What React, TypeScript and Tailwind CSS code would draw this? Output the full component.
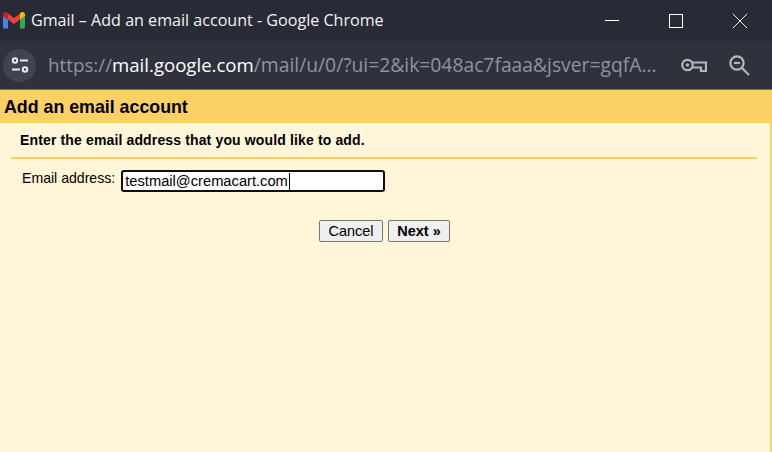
const GmailLogo = () => (
  <svg width="22" height="17" viewBox="0 0 22 17" className="shrink-0">
    <path d="M1.5 16.5C.7 16.5 0 15.8 0 15V4l5 3.5v9z" fill="#4285f4" />
    <path d="M22 4v11c0 .8-.7 1.5-1.5 1.5H17v-9z" fill="#34a853" />
    <path d="M0 4V2.6C0 .6 2.3-.6 3.9.6L5 1.5v6z" fill="#c5221f" />
    <path d="M5 7.5v-6l6 4.4 6-4.4v6l-6 4.4z" fill="#ea4335" />
    <path d="M17 1.5 18.1.6C19.7-.6 22 .6 22 2.6V4l-5 3.5z" fill="#fbbc04" />
  </svg>
)

const TuneIcon = () => (
  <svg width="18" height="18" viewBox="0 0 18 18" fill="none" stroke="#e8eaed" strokeWidth="2">
    <circle cx="4" cy="4.5" r="2.2" />
    <path d="M9 4.5h8" />
    <path d="M1 13.5h8" />
    <circle cx="14" cy="13.5" r="2.2" />
  </svg>
)

const KeyIcon = () => (
  <svg width="26" height="14" viewBox="0 0 26 14" fill="none" stroke="#b4b6ba" strokeWidth="2.2">
    <circle cx="6.5" cy="7" r="5.2" />
    <circle cx="6.5" cy="7" r="1.3" fill="#b4b6ba" strokeWidth="1" />
    <path d="M11.5 4.5H25v8.5h-5V9.5h-8.5" />
  </svg>
)

const ZoomOutIcon = () => (
  <svg width="21" height="21" viewBox="0 0 21 21" fill="none" stroke="#b4b6ba" strokeWidth="2.2">
    <circle cx="8" cy="8" r="6.6" />
    <path d="M5 8h6" />
    <path d="M13 13l7 7" />
  </svg>
)

const App = () => {
  return (
    <div className="flex h-[452px] w-[772px] flex-col overflow-hidden bg-[#fff6d9] font-['Liberation_Sans',Arial,sans-serif]">
      {/* Window title bar */}
      <div className="flex h-[41px] shrink-0 items-center bg-[#282b36] pl-[3px]">
        <GmailLogo />
        <span className="ml-[6px] font-['Open_Sans','Noto_Sans',sans-serif] text-[16.1px] whitespace-nowrap text-[#f1f1f3]">
          Gmail – Add an email account - Google Chrome
        </span>
        <div className="ml-auto flex items-center">
          <div className="h-px w-[14px] bg-white" />
          <div className="ml-[50px] h-[14px] w-[14px] border border-white" />
          <svg width="16" height="16" viewBox="0 0 16 16" className="mr-[24px] ml-[49px]" stroke="#f1f1f3" strokeWidth="1">
            <path d="M.8.8l14.4 14.4M15.2.8.8 15.2" />
          </svg>
        </div>
      </div>

      {/* Address bar */}
      <div className="flex h-[49px] shrink-0 items-center border-b border-b-[#6b6c70] bg-[#2f323c] pl-[3px]">
        <div className="flex h-[33px] w-[33px] items-center justify-center rounded-full bg-[#3f4453]">
          <TuneIcon />
        </div>
        <div className="ml-[12px] font-['Open_Sans','Noto_Sans',sans-serif] text-[19.3px] whitespace-nowrap text-[#8f949c]">
          <span className="text-[18.8px]">https://</span>
          <span className="text-[18.6px] text-white">mail.google.com</span>/mail/u/0/?ui=2&amp;ik=048ac7faaa&amp;jsver=gqfA...
        </div>
        <div className="ml-auto flex items-center">
          <KeyIcon />
          <div className="mr-[22px] ml-[22px]">
            <ZoomOutIcon />
          </div>
        </div>
      </div>

      {/* Dialog */}
      <div className="flex min-h-0 flex-1 flex-col border-r-2 border-r-[#fbd165]">
        <div className="-mr-[2px] flex h-[33px] shrink-0 items-center bg-[#fbd165] pt-[2px] pl-[4px]">
          <h1 className="text-[17.8px] font-bold text-black">Add an email account</h1>
        </div>
        <p className="mt-[8px] ml-[20px] text-[14px] leading-[18px] font-bold tracking-[0.14px] text-black">
          Enter the email address that you would like to add.
        </p>
        <div className="mt-[8px] mr-[13px] ml-[11px] h-[2px] shrink-0 bg-[#fbd165]" />
        <div className="mt-[11px] ml-[22px] flex items-start">
          <label className="text-[14.1px] leading-[16px] whitespace-nowrap text-black">Email address:</label>
          <div className="relative ml-[6px] flex h-[22px] w-[264px] items-center rounded-[3px] border-2 border-[#101010] bg-white pl-[2px] text-[14.7px] text-black">
            testmail@cremacart.com
            <span className="ml-px h-[17px] w-px bg-black" />
          </div>
        </div>
        <div className="mt-[28px] ml-[319px] flex gap-[5px]">
          <button className="h-[22px] w-[64px] rounded-[2px] border border-[#767676] bg-[#efefef] text-[14.5px] leading-none text-black">
            Cancel
          </button>
          <button className="h-[22px] w-[62px] rounded-[2px] border border-[#767676] bg-[#efefef] text-[14.5px] leading-none font-bold text-black">
            Next »
          </button>
        </div>
      </div>
    </div>
  )
}

export default App
